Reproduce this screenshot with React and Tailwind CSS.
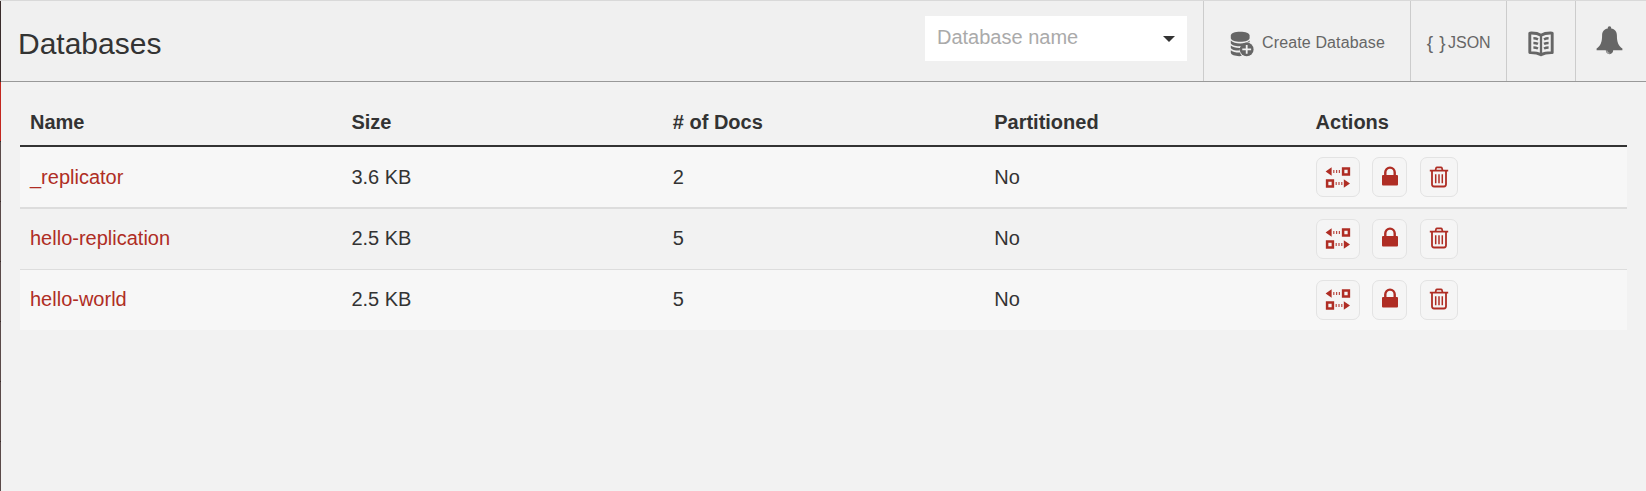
import React from "react";

const databases = [
  { name: "_replicator", size: "3.6 KB", docs: 2, partitioned: "No" },
  { name: "hello-replication", size: "2.5 KB", docs: 5, partitioned: "No" },
  { name: "hello-world", size: "2.5 KB", docs: 5, partitioned: "No" },
];

const rowStyles = [
  { row: "h-[62px] border-b-2 border-[#dddddd] bg-[#f7f7f7]", text: "px-2.5", icon: "pb-0", lock: "pb-[3px]" },
  { row: "h-[61px] border-b border-[#dddddd]", text: "px-2.5 pb-[2px]", icon: "pb-[2px]", lock: "pb-[5px]" },
  { row: "h-[60px] bg-[#f7f7f7]", text: "px-2.5 pb-[2px]", icon: "pb-[2px]", lock: "pb-[5px]" },
];

function DatabaseAddIcon() {
  return (
    <svg className="h-[26px] w-[25px] shrink-0" viewBox="0 0 25 26" fill="#666">
      <path d="M.8 4.600C.8 2.200 4.800.7 10.200.7s9.400 1.500 9.400 3.900v2.300c0 2.300-4 3.900-9.400 3.900S.8 9.200.8 6.900z" />
      <path d="M.8 9.600c1.800 2.100 5.400 3 9.400 3s7.600-.9 9.400-3v1.600c-3.600 0-6.300 1.400-7.700 3.900-5.300.600-10.100-.6-11.100-2.900z" />
      <path d="M.8 14.400c1.800 1.700 5.200 2.600 9.400 2.500-.4.900-.5 1.800-.5 2.700-4.600.1-8.200-1-8.900-2.900z" />
      <path d="M.8 19.200c1.800 1.600 5 2.500 9.200 2.400.3 1.300.9 2.400 1.800 3.400C6.300 25.600 1.300 24.200.8 21.800z" />
      <circle cx="16.700" cy="18.400" r="6.900" />
      <path d="M16.700 14v8.800M12.300 18.400h8.800" stroke="#f0f0f0" strokeWidth="1.800" fill="none" />
    </svg>
  );
}

function BookIcon() {
  return (
    <svg className="h-[26px] w-[26px]" viewBox="0 0 26 26" fill="none" stroke="#666">
      <path d="M13 4.200C9.800 2.300 6 1.900 1.800 2.100v19.500c4.200-.1 8 .3 11.200 2.200 3.200-1.900 7-2.300 11.200-2.200V2.100C20 1.900 16.200 2.300 13 4.200z" strokeWidth="2.900" strokeLinejoin="round" />
      <path d="M13 4v19.500" strokeWidth="2.300" />
      <path d="M5.400 7.300c1.700 0 3.200.3 4.600 1M5.400 11.900c1.700 0 3.200.3 4.600 1M5.400 16.500c1.700 0 3.200.3 4.600 1M20.600 7.300c-1.700 0-3.200.3-4.600 1M20.600 11.900c-1.700 0-3.200.3-4.600 1M20.600 16.500c-1.700 0-3.200.3-4.600 1" strokeWidth="2.500" />
    </svg>
  );
}

function BellIcon() {
  return (
    <svg className="h-[29px] w-[27px]" viewBox="0 0 27 29" fill="#666">
      <path d="M13.500.3c1.200 0 1.800.9 1.700 2.100 3.700.6 5.700 3.200 5.700 6.800 0 7.200 1.500 10.400 5.500 13.400v1.700H17.200c0 2.200-1.600 3.900-3.700 3.900s-3.700-1.700-3.700-3.900H.6v-1.700c4-3 5.500-6.200 5.500-13.400 0-3.600 2-6.200 5.700-6.800-.1-1.200.5-2.100 1.700-2.100z" />
      <path d="M10.900 24.600c0 1.500 1 2.500 2.600 2.600" fill="none" stroke="#f0f0f0" strokeWidth=".7" />
    </svg>
  );
}

function ReplicateIcon() {
  return (
    <svg className="h-[22px] w-[26px]" viewBox="0 0 26 22" fill="#af2d24">
      <path d="M.6 5.500 6.600 1.200v8.600z" />
      <path d="M8.200 4h1.200v3H8.200zM11 4h1.200v3H11zM13.800 4H15v3h-1.200z" opacity=".85" />
      <path d="M18.100 2.600h5.800v5.800h-5.800z" fill="none" stroke="#af2d24" strokeWidth="2.500" />
      <path d="M2.100 14.600h5.800v5.800H2.100z" fill="none" stroke="#af2d24" strokeWidth="2.500" />
      <path d="M10.600 16h1.200v3h-1.200zM13.400 16h1.200v3h-1.200zM16.200 16h1.200v3h-1.200z" opacity=".85" />
      <path d="m25 17.500-6.200-4.300v8.600z" />
    </svg>
  );
}

function LockIcon() {
  return (
    <svg className="ml-[1px] h-[20px] w-[16px]" viewBox="0 0 16 20">
      <path d="M3.300 10V6.300a4.700 4.700 0 0 1 9.400 0V10" fill="none" stroke="#af2d24" strokeWidth="2.400" />
      <rect y="9" width="16" height="10.500" rx="1" fill="#af2d24" />
    </svg>
  );
}

function TrashIcon() {
  return (
    <svg className="h-[22px] w-[20px]" viewBox="0 0 20 22" fill="none" stroke="#af2d24">
      <path d="M.8 4.700h18.400M6.400 4.500l.7-2.400q.2-.8 1-.8h3.800q.8 0 1 .8l.7 2.400" strokeWidth="1.700" />
      <path d="M3 5v13.300q0 2.200 2 2.200h10q2 0 2-2.200V5" strokeWidth="1.800" />
      <path d="M6.700 8.300v9M10 8.300v9M13.300 8.300v9" strokeWidth="1.500" />
    </svg>
  );
}

function ActionButton({ label, className, children }) {
  return (
    <button
      type="button"
      aria-label={label}
      className={`flex h-10 items-center justify-center rounded-[7px] border border-[#e3e3e3] bg-[#f5f5f5] ${className}`}
    >
      {children}
    </button>
  );
}

function NavEdge() {
  return (
    <div className="flex w-px shrink-0 flex-col bg-[#5a4a49]">
      <div className="h-[81px] shrink-0 bg-[#3a2c2b]" />
      <div className="h-[59px] shrink-0 bg-[#c3271f]" />
      {[0, 1, 2, 3, 4, 5].map((i) => (
        <div key={i} className="h-[60px] shrink-0 border-t border-[#3a2c2b]" />
      ))}
    </div>
  );
}

export default function App() {
  return (
    <div className="flex h-[491px] w-full flex-col overflow-hidden border-t border-[#d9d9d9] bg-[#f2f2f2] font-['Liberation_Sans',Arial,sans-serif] text-[#333333]">
      <div className="flex min-h-0 flex-1">
        <NavEdge />
        <div className="flex min-w-0 flex-1 flex-col">
          <header className="flex h-[81px] shrink-0 items-stretch border-b border-[#999999] bg-[#f0f0f0]">
            <h1 className="flex flex-1 items-center pt-[4px] pl-[17px] text-[30px]">Databases</h1>
            <div className="mt-[15px] mr-4 flex h-[45px] w-[262px] items-center justify-between bg-white pr-3 pl-3">
              <span className="pb-[3px] text-[20px] text-[#aaaaaa]">Database name</span>
              <span className="mt-[1px] border-x-[6.5px] border-t-[6px] border-x-transparent border-t-[#333333]" />
            </div>
            <button type="button" className="flex w-[207px] items-center gap-[7px] border-l border-[#cccccc] pl-[26px] text-[16px] text-[#666666]">
              <span className="pt-[5px]"><DatabaseAddIcon /></span>
              <span className="pt-[4px] tracking-[0.13px]">Create Database</span>
            </button>
            <button type="button" className="flex w-24 items-center border-l border-[#cccccc] pt-[4px] pl-[14px] text-[16px] text-[#666666]">
              <span className="w-[23px] text-[19px] leading-5 tracking-[0.5px] whitespace-nowrap">{"{ }"}</span>
              <span>JSON</span>
            </button>
            <button type="button" aria-label="Documentation" className="flex w-[69px] items-center justify-center border-l border-[#cccccc] pt-[5px]">
              <BookIcon />
            </button>
            <button type="button" aria-label="Notifications" className="flex w-[71px] items-center justify-center border-l border-[#cccccc] pr-[3px] pb-[1px]">
              <BellIcon />
            </button>
          </header>
          <main className="pt-[17px] pr-[19px] pl-[19px]">
            <div className="grid h-[48px] grid-cols-5 items-center border-b-2 border-[#333333] text-[20px] font-bold">
              {["Name", "Size", "# of Docs", "Partitioned", "Actions"].map((title) => (
                <span key={title} className="px-2.5">{title}</span>
              ))}
            </div>
            {databases.map((db, i) => (
              <div key={db.name} className={`grid grid-cols-5 items-center text-[20px] ${rowStyles[i].row}`}>
                <a href="#" className={`text-[#af2d24] ${rowStyles[i].text}`}>{db.name}</a>
                <span className={rowStyles[i].text}>{db.size}</span>
                <span className={rowStyles[i].text}>{db.docs}</span>
                <span className={rowStyles[i].text}>{db.partitioned}</span>
                <div className="flex px-2.5">
                  <ActionButton label="Replicate" className={`mr-3 w-11 ${rowStyles[i].icon}`}><ReplicateIcon /></ActionButton>
                  <ActionButton label="Permissions" className={`mr-[13px] w-[35px] ${rowStyles[i].lock}`}><LockIcon /></ActionButton>
                  <ActionButton label="Delete" className={`w-[38px] ${rowStyles[i].icon}`}><TrashIcon /></ActionButton>
                </div>
              </div>
            ))}
          </main>
        </div>
      </div>
    </div>
  );
}
